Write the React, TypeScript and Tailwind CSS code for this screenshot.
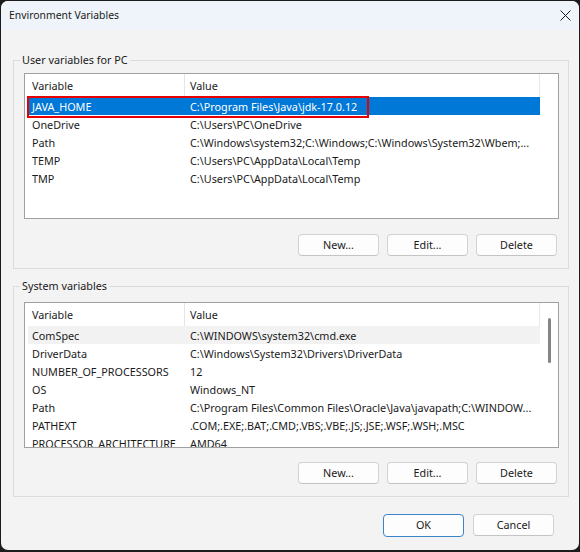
import React from "react";

type Row = [string, string];

const userVars: Row[] = [
  ["JAVA_HOME", "C:\\Program Files\\Java\\jdk-17.0.12"],
  ["OneDrive", "C:\\Users\\PC\\OneDrive"],
  ["Path", "C:\\Windows\\system32;C:\\Windows;C:\\Windows\\System32\\Wbem;..."],
  ["TEMP", "C:\\Users\\PC\\AppData\\Local\\Temp"],
  ["TMP", "C:\\Users\\PC\\AppData\\Local\\Temp"],
];

const sysVars: Row[] = [
  ["ComSpec", "C:\\WINDOWS\\system32\\cmd.exe"],
  ["DriverData", "C:\\Windows\\System32\\Drivers\\DriverData"],
  ["NUMBER_OF_PROCESSORS", "12"],
  ["OS", "Windows_NT"],
  ["Path", "C:\\Program Files\\Common Files\\Oracle\\Java\\javapath;C:\\WINDOW..."],
  ["PATHEXT", ".COM;.EXE;.BAT;.CMD;.VBS;.VBE;.JS;.JSE;.WSF;.WSH;.MSC"],
  ["PROCESSOR_ARCHITECTURE", "AMD64"],
];

function Btn({ label, primary }: { label: string; primary?: boolean }) {
  return (
    <div
      className={
        primary
          ? "w-[81px] h-[23px] flex items-center justify-center rounded-[4px] border border-[#3a84cc] bg-[#fdfdfd] text-[#1a1a1a]"
          : "w-[81px] h-[22px] flex items-center justify-center rounded-[4px] border border-[#d3d3d3] border-b-[#c4c4c4] bg-[#fdfdfd] text-[#1a1a1a]"
      }
    >
      {label}
    </div>
  );
}

function List({
  rows,
  selected,
  hover,
  scroll,
}: {
  rows: Row[];
  selected?: number;
  hover?: number;
  scroll?: boolean;
}) {
  return (
    <div className="relative w-[535px] h-[146px] border border-[#a0a0a0] bg-white flex overflow-hidden">
      <div className="w-[515px] flex flex-col">
        <div className="h-[23px] shrink-0 flex items-center text-[#1a1a1a] border-r border-[#e8e8e8]">
          <div className="w-[160px] h-full pl-[7px] pt-px flex items-center border-r border-[#e5e5e5]">Variable</div>
          <div className="pl-[5px] pt-px">Value</div>
        </div>
        {rows.map((r, i) => (
          <div
            key={i}
            className={
              "ml-[3px] w-[512px] h-[18px] shrink-0 flex items-center pt-[2px] leading-[14px] " +
              (i === selected
                ? "bg-[#0078d7] text-white"
                : i === hover
                ? "bg-[#f2f2f2] text-[#1a1a1a]"
                : "text-[#1a1a1a]")
            }
          >
            <div className="w-[157px] pl-[4px] whitespace-nowrap overflow-hidden">{r[0]}</div>
            <div className="flex-1 pl-[5px] whitespace-nowrap overflow-hidden">{r[1]}</div>
          </div>
        ))}
      </div>
      <div className="w-[18px] flex justify-center">
        {scroll && <div className="mt-[15px] w-[3px] h-[45px] rounded-full bg-[#858585]" />}
      </div>
    </div>
  );
}

function Group({
  title,
  children,
  pt,
  btnMt,
}: {
  title: string;
  children: React.ReactNode;
  pt: string;
  btnMt: string;
}) {
  return (
    <div className={"relative w-[556px] border border-[#dcdcdc] pl-[10px] pr-[9px] pb-[12px] " + pt}>
      <span className="absolute -top-[9px] left-[6px] px-[2px] leading-[16px] bg-[#f3f3f3] text-[#1a1a1a]">
        {title}
      </span>
      {children}
      <div className={"flex justify-end gap-[8px] mr-[2px] " + btnMt}>
        <Btn label="New..." />
        <Btn label="Edit..." />
        <Btn label="Delete" />
      </div>
    </div>
  );
}

export default function App() {
  return (
    <div className="w-[580px] h-[552px] bg-[#1b1b1b] pt-px pl-px font-['Noto_Sans',sans-serif] text-[10.8px]">
      <div className="w-[578px] h-[549px] rounded-[7px] bg-[#f3f3f3] overflow-hidden flex flex-col">
        <div className="h-[29px] shrink-0 bg-[#eef4f9] flex items-center justify-between pl-[8px] pr-[8px] text-[#1a1a1a] text-[10.4px]">
          <span>Environment Variables</span>
          <svg width="11" height="11" viewBox="0 0 11 11" className="mt-[-1px]">
            <path d="M0.5 0.5 L10.5 10.5 M10.5 0.5 L0.5 10.5" stroke="#1a1a1a" strokeWidth="1" />
          </svg>
        </div>
        <div className="pl-[12px] pt-[30px] flex flex-col">
          <Group title="User variables for PC" pt="pt-[12px]" btnMt="mt-[15px]">
            <List rows={userVars} selected={0} />
          </Group>
          <div className="h-[17px]" />
          <Group title="System variables" pt="pt-[15px]" btnMt="mt-[14px]">
            <List rows={sysVars} hover={0} scroll />
          </Group>
          <div className="flex justify-end gap-[9px] pr-[25px] mt-[17px]">
            <Btn label="OK" primary />
            <Btn label="Cancel" />
          </div>
        </div>
      </div>
      <div className="absolute left-[27px] top-[96px] w-[342px] h-[22px] border-2 border-[#e80000] pointer-events-none" />
    </div>
  );
}
